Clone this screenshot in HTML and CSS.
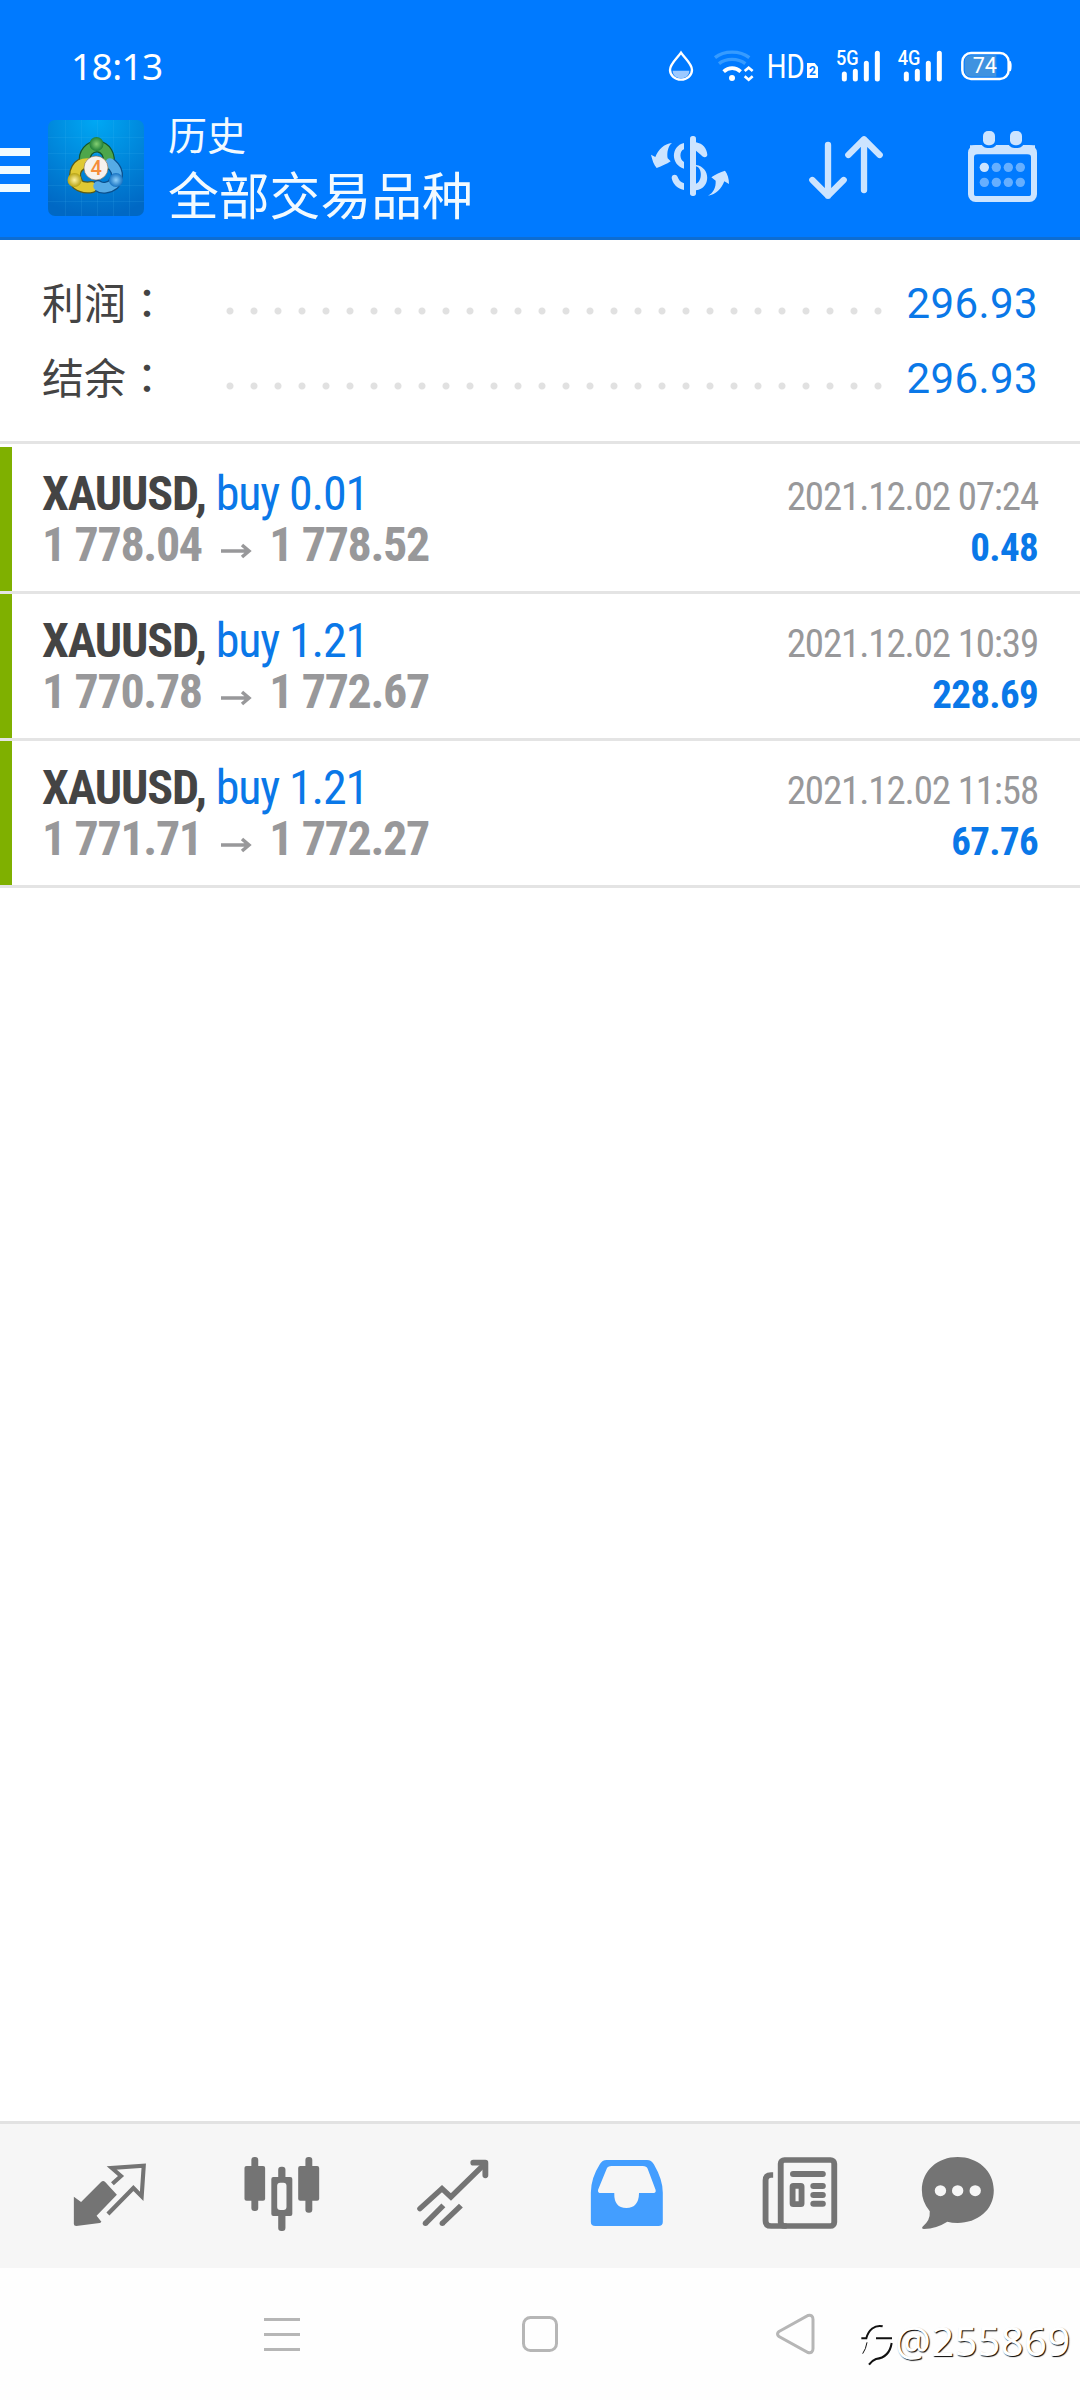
FILE: index.html
```html
<!DOCTYPE html>
<html lang="zh-CN">
<head>
<meta charset="utf-8">
<title>历史</title>
<link rel="stylesheet" href="styles.css">
</head>
<body>
<div class="screen">
  <header class="header">
    <div class="status">
      <span class="clock">18:13</span>
      <div class="status-icons">
        <svg class="i-drop" viewBox="141 87 84 102" fill="none"><path d="M183 98C170 117 150 132 150 150a33 29 0 0 0 66 0C216 132 196 117 183 98z" stroke="#fff" stroke-width="7"/><path d="M158 152h50c0 30-50 30-50 0z" fill="#9cc9ff"/></svg>
        <svg class="i-wifi" viewBox="279 87 126 102" fill="none"><path d="M285 113C312 91 360 91 388 113" stroke="#369bff" stroke-width="10"/><path d="M297 131C318 114 354 114 376 131" stroke="#369bff" stroke-width="10"/><path d="M311 155C326 141 347 141 362 155" stroke="#fff" stroke-width="11"/><circle cx="336" cy="174" r="9" fill="#fff"/><path d="M374 153l12-10 12 10M374 169l12 10 12-10" stroke="#fff" stroke-width="8"/></svg>
        <svg class="i-hd" viewBox="441 87 156 102"><text x="440" y="173" font-size="98" textLength="114" lengthAdjust="spacingAndGlyphs" fill="#fff">HD</text><path d="M561 129h23l10 12v33h-33z" fill="#fff"/><text x="567" y="166" font-size="36" font-weight="700" fill="#007aff">2</text></svg>
        <svg class="i-5g" viewBox="645 87 138 102"><text x="648" y="136" font-size="58" font-weight="500" textLength="68" lengthAdjust="spacingAndGlyphs" fill="#fff">5G</text><path d="M673 162v15M706 154v23M739 130v47M772 100v77" stroke="#fff" stroke-width="15" stroke-linecap="round"/></svg>
        <svg class="i-4g" viewBox="831 87 138 102"><text x="833" y="136" font-size="58" font-weight="500" textLength="68" lengthAdjust="spacingAndGlyphs" fill="#fff">4G</text><path d="M859 162v15M892 154v23M925 130v47M958 100v77" stroke="#fff" stroke-width="15" stroke-linecap="round"/></svg>
        <svg class="i-bat" viewBox="1017 87 159 102"><rect x="1027" y="99" width="139" height="78" rx="26" fill="none" stroke="#fff" stroke-width="7.5"/><path d="M1053 106h76v64h-76q-19 0-19-19v-26q0-19 19-19z" fill="#3f92e0"/><path d="M1169 124q5 14 0 29" fill="none" stroke="#fff" stroke-width="7"/><text x="1058" y="160" font-size="67" textLength="73" lengthAdjust="spacingAndGlyphs" fill="#fff">74</text></svg>
      </div>
    </div>
    <div class="toolbar">
      <div class="burger"><i></i><i></i><i></i></div>
      <svg class="logo" viewBox="0 0 96 96">
        <defs>
          <radialGradient id="bg" cx=".5" cy="0" r="1"><stop offset="0" stop-color="#00a8f4"/><stop offset="1" stop-color="#0068c4"/></radialGradient>
          <radialGradient id="gg"><stop offset="0" stop-color="#83cf72"/><stop offset="1" stop-color="#1f7f38"/></radialGradient>
          <radialGradient id="yg"><stop offset="0" stop-color="#fff3a0"/><stop offset="1" stop-color="#b8a312"/></radialGradient>
          <radialGradient id="lg"><stop offset="0" stop-color="#8fd0fa"/><stop offset="1" stop-color="#1672c2"/></radialGradient>
        </defs>
        <rect width="96" height="96" rx="7" fill="url(#bg)"/>
        <path d="M0 17.500h96M0 33.500h96M0 49.500h96M0 65.500h96M0 81.500h96M17.500 0v96M33.500 0v96M49.500 0v96M65.500 0v96M81.500 0v96" stroke="#4cc5f5" stroke-opacity=".13"/>
        <g fill="none" stroke-linecap="round">
          <path d="M37 42a12 13 0 1 1 23 2" stroke="#14562d" stroke-width="12"/>
          <path d="M29 62C24 52 30 43 39 43M29 64c4 3 10 4 15 3" stroke="#5a5b16" stroke-width="12"/>
          <path d="M66 62C73 54 66 46 62 43M66 64c-5 4-12 5-16 2" stroke="#0b4f8c" stroke-width="12"/>
          <path d="M37 42a12 13 0 1 1 23 2" stroke="#4da64b" stroke-width="9.500"/>
          <path d="M29 62C24 52 30 43 39 43M29 64c4 3 10 4 15 3" stroke="#dfc934" stroke-width="9.500"/>
          <path d="M66 62C73 54 66 46 62 43M66 64c-5 4-12 5-16 2" stroke="#56abe6" stroke-width="9.500"/>
        </g>
        <circle cx="48.500" cy="24" r="7" fill="url(#gg)"/>
        <circle cx="26.500" cy="60" r="7" fill="url(#yg)"/>
        <circle cx="68" cy="60" r="7" fill="url(#lg)"/>
        <circle cx="48" cy="48" r="12" fill="#f6f2ee" stroke="#866b4d" stroke-width=".6"/>
        <text x="42.500" y="55" font-size="20" font-weight="500" fill="#f58d3a">4</text>
      </svg>
      <div class="titles"><div class="t1">历史</div><div class="t2">全部交易品种</div></div>
      <div class="actions">
        <svg class="a-cash" viewBox="87 330 246 222" fill="#cce4ff"><rect x="210" y="348" width="18" height="180" rx="8"/><path d="M192 369v19c-14 4-14 31 0 38v20c-40-12-40-68 0-77zM192 510c-22-5-34-19-37-36-1-10 14-14 18-3 3 9 9 16 19 19zM228 367c21 4 32 18 34 37 0 10-14 9-18 2l-16-14zM228 435c44 6 46 70 0 76v-20c19-5 20-48 0-52z"/><path d="M156 369c-12 9-16 29-13 46l9 9c-12 8-26 14-42 20-9-10-13-24-17-40l13 7c9-22 26-40 50-42zM264 527c16-9 24-24 23-45l-13-10c13-9 26-15 41-20 8 10 12 25 12 40l-14-8c-9 22-24 40-49 43z"/></svg>
        <svg class="a-sort" viewBox="564 330 230 222" fill="none" stroke="#cce4ff" stroke-width="19" stroke-linecap="round" stroke-linejoin="round"><path d="M624 375v152M577 480l47 47 47-47M732 510V358M685 405l47-47 47 47"/></svg>
        <svg class="a-cal" viewBox="1038 330 219 222"><rect x="1053" y="384" width="189" height="153" rx="14" fill="none" stroke="#cce4ff" stroke-width="18"/><path d="M1050 376h195v27H1050z" fill="#cce4ff"/><path d="M1062 412v-10h171v10q0-10-12-10h-147q-12 0-12 10z" fill="#cce4ff"/><rect x="1082" y="326" width="50" height="58" rx="20" fill="#007aff"/><rect x="1163" y="326" width="50" height="58" rx="20" fill="#007aff"/><rect x="1089" y="333" width="36" height="43" rx="15" fill="#cce4ff"/><rect x="1170" y="333" width="36" height="43" rx="15" fill="#cce4ff"/><circle cx="1093" cy="442" r="14" fill="#cce4ff"/><g fill="#66afff"><circle cx="1129" cy="442" r="14"/><circle cx="1165" cy="442" r="14"/><circle cx="1201" cy="442" r="14"/><circle cx="1093" cy="487" r="14"/><circle cx="1129" cy="487" r="14"/><circle cx="1165" cy="487" r="14"/><circle cx="1201" cy="487" r="14"/></g></svg>
      </div>
    </div>
  </header>

  <section class="summary">
    <div class="sum-row"><span class="label">利润<b lang="zh-Hant">：</b></span><span class="dots"></span><span class="value">296.93</span></div>
    <div class="sum-row"><span class="label">结余<b lang="zh-Hant">：</b></span><span class="dots"></span><span class="value">296.93</span></div>
  </section>

  <main class="deals">
    <article class="deal">
      <div class="line"><span class="sym">XAUUSD, <em>buy 0.01</em></span><span class="date">2021.12.02 07:24</span></div>
      <div class="line"><span class="prices">1 778.04 <svg class="arrow" viewBox="0 0 30 14"><path d="M0 7h28M21 1l7 6-7 6"/></svg> 1 778.52</span><span class="profit">0.48</span></div>
    </article>
    <article class="deal">
      <div class="line"><span class="sym">XAUUSD, <em>buy 1.21</em></span><span class="date">2021.12.02 10:39</span></div>
      <div class="line"><span class="prices">1 770.78 <svg class="arrow" viewBox="0 0 30 14"><path d="M0 7h28M21 1l7 6-7 6"/></svg> 1 772.67</span><span class="profit">228.69</span></div>
    </article>
    <article class="deal">
      <div class="line"><span class="sym">XAUUSD, <em>buy 1.21</em></span><span class="date">2021.12.02 11:58</span></div>
      <div class="line"><span class="prices">1 771.71 <svg class="arrow" viewBox="0 0 30 14"><path d="M0 7h28M21 1l7 6-7 6"/></svg> 1 772.27</span><span class="profit">67.76</span></div>
    </article>
  </main>

  <nav class="tabs">
    <svg viewBox="198 162 244 252" preserveAspectRatio="none" fill="#747474"><path d="M215 290l21 16 58-60q6-6 12 0l34 38-59 63 14 18q-1 3-5 4l-68 9q-7 0-7-6z"/><path d="M327 251l25-23-27-24 93-7-6 92-24-25-74 78" fill="none" stroke="#747474" stroke-width="12"/></svg>
    <svg viewBox="696 162 244 252" preserveAspectRatio="none" fill="#747474"><rect x="729" y="171" width="20" height="162" rx="9"/><rect x="709" y="198" width="60" height="104" rx="6"/><rect x="886" y="171" width="20" height="167" rx="9"/><rect x="865" y="198" width="61" height="104" rx="6"/><rect x="807" y="200" width="21" height="193" rx="9"/><rect x="787" y="231" width="61" height="117" rx="6"/><rect x="804" y="248" width="27" height="82" rx="9" fill="#f6f6f6"/></svg>
    <svg viewBox="1195 162 244 252" preserveAspectRatio="none" fill="none" stroke="#747474" stroke-width="16"><path d="M1221 326l64-60 26 25 99-100" stroke-linecap="round"/><path d="M1376 188h35v38" stroke-width="17" stroke-linecap="round" stroke-linejoin="round"/><path d="M1237 370l52-54M1286 370l54-53"/><g fill="#747474" stroke="none"><circle cx="1237" cy="370" r="8"/><circle cx="1286" cy="370" r="8"/></g></svg>
    <svg viewBox="130 162 244 252" preserveAspectRatio="none" fill="#439eff"><path fill-rule="evenodd" d="M193 180h117q13 0 20 13 26 46 26 85v88q0 12-13 12H160q-13 0-13-12v-88q0-43 26-85 7-13 20-13zM207 198q-11 0-14 8l-25 63q-2 10 8 10h39q-1 45 35 45t37-45h39q12 0 9-10l-23-63q-3-8-14-8z"/></svg>
    <svg viewBox="633 162 244 252" preserveAspectRatio="none" fill="none" stroke="#747474" stroke-width="17"><rect x="699" y="180" width="155.500" height="198" rx="11"/><path d="M677 225h-6q-16 0-16 16v121q0 16 16 16h45"/><path d="M735 222h86M794 258h27M794 285h27M794 311.500h27" stroke-width="18" stroke-linecap="round"/><rect x="733.500" y="257.500" width="26" height="55" rx="2"/></svg>
    <svg viewBox="1092 162 244 252" preserveAspectRatio="none"><path fill="#747474" d="M1213 171c57 0 105 40 105 100s-48 98-105 98q-17 0-30-4-32 21-68 22-8-1-4-7 23-18 21-46-23-28-23-63c0-60 47-100 104-100z"/><g fill="#f6f6f6"><circle cx="1163" cy="272" r="16.500"/><circle cx="1213" cy="272" r="16.500"/><circle cx="1264" cy="272" r="16.500"/></g></svg>
  </nav>
  <footer class="sysnav">
    <svg viewBox="0 0 40 44"><path d="M2 7.500h36M2 22.500h36M2 37.500h36"/></svg>
    <svg viewBox="0 0 40 44"><rect x="3.500" y="5.500" width="33" height="33" rx="7"/></svg>
    <svg viewBox="0 0 40 44"><path d="M3 19.500L32 3.500q5-1 5 4v29q0 5-5 4L3 24.500q-3-2.500 0-5z"/></svg>
    <div class="mark"><svg viewBox="30 40 99 132"><path d="M34 86h15C55 62 74 44 98 50M78 86h48M125 100C120 132 104 145 78 148q-13 5-21 17" stroke-width="6"/><path d="M51 98q-3 20-13 34" stroke-width="3"/></svg><span>@255869</span></div>
  </footer>
</div>
</body>
</html>
```
FILE: styles.css
```css
* { box-sizing: border-box; }
body { margin: 0; background: #fff; font-family: Roboto, "Noto Sans CJK SC", sans-serif; }
svg { display: block; flex: none; overflow: visible; }
.screen { width: 1080px; height: 2400px; display: flex; flex-direction: column; background: #fff; overflow: hidden; }

.header { height: 240px; background: #007aff; border-bottom: 3px solid #0d6dd2; color: #fff; }
.status { height: 120px; padding: 49px 68px 0 71px; display: flex; justify-content: space-between; }
.clock { font: 400 37px/33px "Noto Sans", sans-serif; letter-spacing: -.6px; }
.status-icons { display: flex; font-family: Roboto, sans-serif; }
.status-icons svg { height: 34px; }
.i-drop { width: 28px; margin-right: 18px; }
.i-wifi { width: 42px; margin-right: 12px; }
.i-hd { width: 52px; margin-right: 16px; }
.i-5g, .i-4g { width: 46px; margin-right: 16px; }
.i-bat { width: 53px; }

.toolbar { display: flex; height: 96px; }
.burger { width: 48px; padding-top: 28px; display: flex; flex-direction: column; gap: 10px; }
.burger i { width: 30px; height: 8px; background: #f0fbff; }
.logo { width: 96px; height: 96px; font-family: Roboto, sans-serif; }
.titles { margin-left: 24px; margin-top: -5px; white-space: nowrap; color: #f2faff; }
.t1 { font-size: 39px; line-height: 44px; }
.t2 { font-size: 50.8px; line-height: 60px; margin-top: 9px; }
.actions { display: flex; margin-left: auto; padding: 10px 41px 0 0; }
.actions svg { height: 74px; }
.a-cash { width: 82px; margin-right: 77px; }
.a-sort { width: 76.7px; margin-right: 81.300px; }
.a-cal { width: 73px; }

.summary { height: 204px; padding-top: 26px; border-bottom: 3px solid #e4e4e4; }
.sum-row { height: 75px; padding: 0 42px; display: flex; align-items: center; color: #444; }
.label { width: 184px; padding-bottom: 5px; font: 400 42px/70px "Noto Sans CJK SC", sans-serif; }
.label b { font-family: "Noto Sans CJK TC", sans-serif; font-weight: 400; }
.dots { width: 672px; height: 8px; margin-top: 15px; margin-left: -8px; background: radial-gradient(circle at 12px 4px, #e1e1e1 3px, transparent 4px) 0 0 / 24px 8px; }
.value { margin-left: auto; font-size: 42px; letter-spacing: .4px; color: #0a78e8; }

.deals { padding-top: 3px; flex: 1; }
.deal { height: 147px; border-bottom: 3px solid #e4e4e4; padding: 21px 42px 0; background: linear-gradient(#7fb000, #7fb000) 0 0 / 12px 100% no-repeat; background-clip: padding-box; }
.line { height: 51px; display: flex; justify-content: space-between; align-items: baseline; white-space: pre; font: 400 48px/51px "Roboto Condensed", Roboto, sans-serif; font-stretch: 75%; letter-spacing: -1.150px; }
.sym { color: #444; font-weight: 700; }
.sym em { font-style: normal; font-weight: 400; color: #0a78e8; }
.date { font-size: 39px; color: #98989a; }
.prices { font-weight: 700; color: #98989a; letter-spacing: -1.350px; }
.arrow { display: inline-block; width: 30px; height: 14px; margin: 0 8px 3px 10px; fill: none; stroke: #98989a; stroke-width: 3.500; }
.profit { font-size: 39px; font-weight: 700; color: #0a78e8; letter-spacing: -.7px; }

.tabs { height: 147px; border-top: 3px solid #e2e2e2; background: #f6f6f6; padding: 30px 0 0 68px; display: grid; grid-template-columns: 171.500px 171.800px 173.300px 173.200px 158px 84px; }
.tabs svg { width: 84px; height: 84px; }
.sysnav { height: 132px; padding: 44px 0 0 262px; display: flex; background: #fefefe; }
.sysnav > svg { width: 40px; height: 44px; margin-right: 218px; fill: none; stroke: #b6b6b6; stroke-width: 3; }
.sysnav > svg:nth-child(2) { margin-right: 216px; }
.sysnav > svg:nth-child(3) { margin-right: 0; }
.mark { display: flex; margin-left: 44px; padding-top: 9px; color: #fff; font: 400 40px/40px "Noto Sans", sans-serif; letter-spacing: .3px; text-shadow: 1px 1px 1px #000; }
.mark svg { width: 33px; height: 44px; margin: 2px 2px 0 0; fill: none; stroke: #111; }
```
